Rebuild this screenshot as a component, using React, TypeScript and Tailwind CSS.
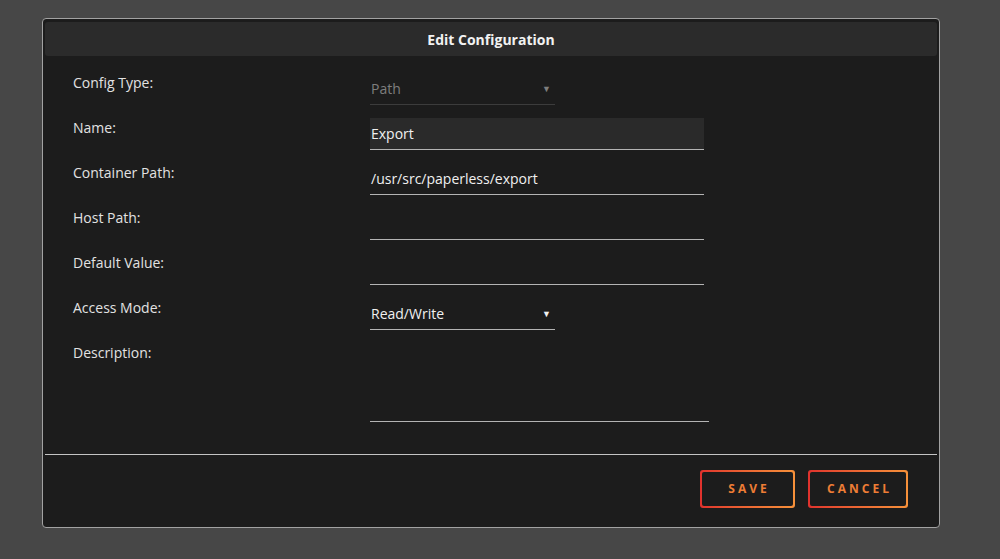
const FIELDS = [
  { label: "Config Type:", kind: "select", value: "Path", disabled: true },
  { label: "Name:", kind: "input", value: "Export", focused: true },
  { label: "Container Path:", kind: "input", value: "/usr/src/paperless/export" },
  { label: "Host Path:", kind: "input", value: "" },
  { label: "Default Value:", kind: "input", value: "" },
  { label: "Access Mode:", kind: "select", value: "Read/Write" },
  { label: "Description:", kind: "textarea", value: "" },
];

const Field = ({ field }: { field: (typeof FIELDS)[number] }) => {
  if (field.kind === "select") {
    return (
      <div
        className={
          "flex h-8 w-[185px] items-center justify-between border-b pl-px pr-1 " +
          (field.disabled ? "border-[#3c3c3c] text-[#7e7e7e]" : "border-[#b4b4b4] text-[#f0f0f0]")
        }
      >
        <span>{field.value}</span>
        <span className="text-[9px]">▼</span>
      </div>
    );
  }
  if (field.kind === "textarea") {
    return <div className="h-[79px] w-[339px] border-b border-[#b4b4b4]" />;
  }
  return (
    <div
      className={
        "flex h-8 w-[334px] items-center border-b border-[#b4b4b4] pl-px text-[#f0f0f0] " +
        (field.focused ? "bg-[#2a2a2a]" : "")
      }
    >
      {field.value}
    </div>
  );
};

const GradientButton = ({ label, width }: { label: string; width: string }) => (
  <button className={"h-[38px] rounded-[3px] bg-gradient-to-r from-[#e0312d] to-[#f6913a] p-[2px] " + width}>
    <span className="flex h-full w-full items-center justify-center rounded-[2px] bg-[#1c1c1c] pl-[3px] text-[12px] font-bold tracking-[3px] text-[#ee7d35]">
      {label}
    </span>
  </button>
);

export default function App() {
  return (
    <div
      className="min-h-screen bg-[#474747] pl-[42px] pt-[18px]"
      style={{ fontFamily: '"Open Sans", "Noto Sans", sans-serif' }}
    >
      <div className="flex h-[510px] w-[898px] flex-col rounded-[4px] border border-[#a2a2a2] bg-[#1c1c1c] p-[2px]">
        <div className="mt-px flex h-[34px] items-center justify-center rounded-[3px] bg-[#2b2b2b] text-[14px] font-bold text-[#f2f2f2]">
          Edit Configuration
        </div>

        <div className="flex flex-col gap-[13px] pl-[28px] pt-[17px] text-[14px]">
          {FIELDS.map((f) => (
            <div key={f.label} className="flex items-start">
              <div className="w-[297px] leading-5 text-[#e2e2e2]">{f.label}</div>
              <Field field={f} />
            </div>
          ))}
        </div>

        <div className="mt-[32px] h-px bg-[#c4c4c4]" />

        <div className="flex justify-end gap-[13px] pr-[29px] pt-[15px]">
          <GradientButton label="SAVE" width="w-[95px]" />
          <GradientButton label="CANCEL" width="w-[100px]" />
        </div>
      </div>
    </div>
  );
}
